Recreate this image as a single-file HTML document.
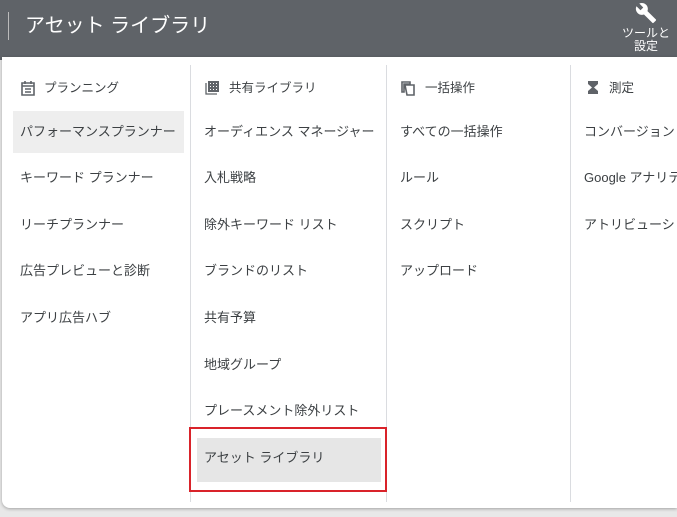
<!DOCTYPE html><html><head><meta charset="utf-8"><style>
html,body{margin:0;width:677px;height:517px;overflow:hidden}
body{background:#e8e8e8;font-family:"Liberation Sans","Noto Sans CJK JP",sans-serif;position:relative}
.hd{position:absolute;left:0;top:0;width:677px;height:60px;background:#5f6368}
.vl{position:absolute;left:8px;top:12px;width:1px;height:28px;background:#bbb}
.tt{position:absolute;left:25px;top:9px;color:#fff;font-size:20px}
.tool{position:absolute;left:618px;top:27px;color:#fff;font-size:12px;line-height:13px;text-align:center;width:56px}
.pn{position:absolute;left:2px;top:57px;width:675px;height:451px;background:#fff;border-radius:0 0 0 8px;box-shadow:0 1px 3px rgba(0,0,0,.3)}
.sep{position:absolute;top:65px;width:1px;height:437px;background:#dadce0}
.t{position:absolute;font-size:13px;color:#3c4043;white-space:nowrap;line-height:16px}
.h{font-size:12.5px;color:#3c4043}
.hl{position:absolute;background:#eeeeee}
</style></head><body>
<div class="hd"><div class="vl"></div><div class="tt">アセット ライブラリ</div>
<svg style="position:absolute;left:635px;top:2px" width="22" height="22" viewBox="0 0 24 24"><path fill="#fff" d="M22.7 19l-9.1-9.1c.9-2.3.4-5-1.5-6.9-2-2-5-2.4-7.4-1.3L9 6 6 9 1.6 4.7C.4 7.1.9 10.1 2.9 12.1c1.9 1.9 4.6 2.4 6.9 1.5l9.1 9.1c.4.4 1 .4 1.4 0l2.3-2.3c.5-.4.5-1.100.1-1.4z"/></svg>
<div class="tool">ツールと<br>設定</div></div>
<div class="pn"></div>
<div class="sep" style="left:190px"></div><div class="sep" style="left:386px"></div><div class="sep" style="left:570px"></div>
<div class="hl" style="left:13px;top:111px;width:171px;height:42px"></div>
<div style="position:absolute;left:189px;top:427px;width:194px;height:61px;border:2px solid #d9232a"></div>
<div class="hl" style="left:197px;top:438px;width:184px;height:44px;background:#e6e6e6"></div>
<svg style="position:absolute;left:21px;top:80px" width="14" height="16" viewBox="0 0 14 16"><path d="M1 3h12v12H1z M1 6h12 M4 1v3 M10 1v3 M4 9h6 M4 12h6" stroke="#5f6368" stroke-width="1.6" fill="none"/></svg>
<svg style="position:absolute;left:205px;top:80px" width="15" height="15" viewBox="0 0 15 15"><path d="M3 1h11v11H3z" fill="#5f6368"/><path d="M1 3v11h11" stroke="#5f6368" stroke-width="1.3" fill="none"/><path d="M5 3h1v1H5zM8 3h1v1H8zM11 3h1v1h-1zM5 6h1v1H5zM8 6h1v1H8zM11 6h1v1h-1zM5 9h1v1H5zM8 9h1v1H8zM11 9h1v1h-1z" fill="#fff"/></svg>
<svg style="position:absolute;left:401px;top:81px" width="15" height="15" viewBox="0 0 15 15"><path d="M1 1h8v2H3v8H1z M4 4h9v10H6z" fill="none" stroke="#5f6368" stroke-width="1.6"/></svg>
<svg style="position:absolute;left:587px;top:80px" width="12" height="15" viewBox="0 0 12 15"><path d="M1 1h10v3L7 7.5 11 11v3H1v-3l4-3.5L1 4z" fill="#5f6368"/></svg>
<div class="t h" style="left:44px;top:80px">プランニング</div>
<div class="t h" style="left:229px;top:80px">共有ライブラリ</div>
<div class="t h" style="left:425px;top:80px">一括操作</div>
<div class="t h" style="left:609px;top:80px">測定</div>
<div class="t" style="left:20px;top:124px">パフォーマンスプランナー</div>
<div class="t" style="left:20px;top:170px">キーワード プランナー</div>
<div class="t" style="left:20px;top:217px">リーチプランナー</div>
<div class="t" style="left:20px;top:263px">広告プレビューと診断</div>
<div class="t" style="left:20px;top:310px">アプリ広告ハブ</div>
<div class="t" style="left:204px;top:124px">オーディエンス マネージャー</div>
<div class="t" style="left:204px;top:170px">入札戦略</div>
<div class="t" style="left:204px;top:217px">除外キーワード リスト</div>
<div class="t" style="left:204px;top:263px">ブランドのリスト</div>
<div class="t" style="left:204px;top:310px">共有予算</div>
<div class="t" style="left:204px;top:357px">地域グループ</div>
<div class="t" style="left:204px;top:403px">プレースメント除外リスト</div>
<div class="t" style="left:204px;top:450px">アセット ライブラリ</div>
<div class="t" style="left:400px;top:124px">すべての一括操作</div>
<div class="t" style="left:400px;top:170px">ルール</div>
<div class="t" style="left:400px;top:217px">スクリプト</div>
<div class="t" style="left:400px;top:263px">アップロード</div>
<div class="t" style="left:584px;top:124px">コンバージョン</div>
<div class="t" style="left:584px;top:170px">Google アナリティクス</div>
<div class="t" style="left:584px;top:217px">アトリビューション</div>
</body></html>
